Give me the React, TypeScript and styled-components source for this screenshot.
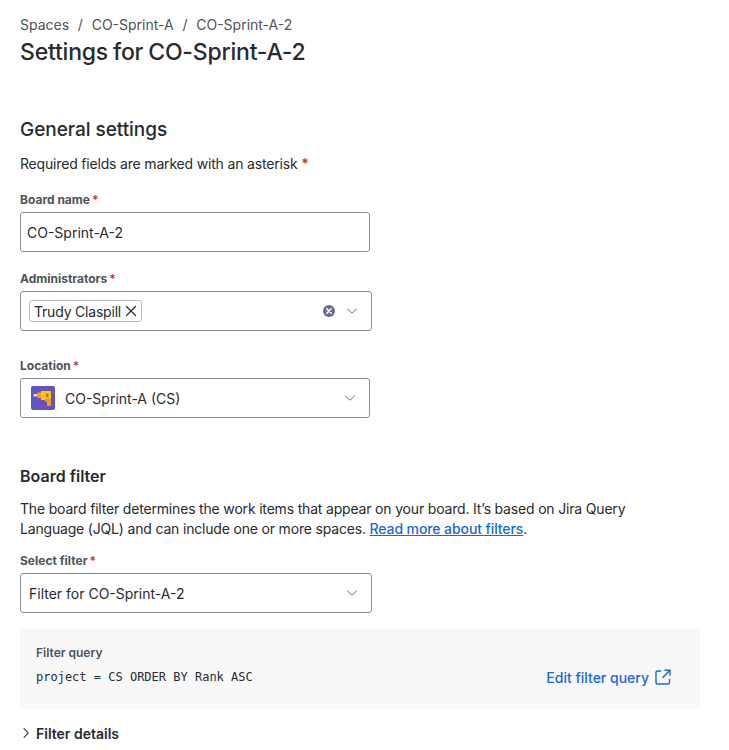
import React from "react";
import styled, { createGlobalStyle } from "styled-components";

const Global = createGlobalStyle`
  html, body { margin: 0; padding: 0; background: #fff; }
  body { font-family: Inter, "Liberation Sans", sans-serif; color: #292a2e; }
`;

const Page = styled.div`
  width: 729px;
  height: 750px;
  overflow: hidden;
  box-sizing: border-box;
  padding: 15px 29px 0 20px;
`;

const Breadcrumbs = styled.nav`
  display: flex;
  align-items: center;
  height: 20px;
  font-size: 14px;
  line-height: 20px;
  color: #505258;
`;

const Crumb = styled.span``;

const Slash = styled.span`
  margin: 0 8.75px;
  color: #505258;
`;

const Title = styled.h1`
  margin: 1px 0 0;
  font-size: 23px;
  line-height: 32px;
  font-weight: 500;
  letter-spacing: -0.2px;
  word-spacing: -1px;
  color: #292a2e;
`;

const SectionTitle = styled.h2`
  margin: 48px 0 0;
  font-size: 19px;
  line-height: 28px;
  font-weight: 500;
  letter-spacing: -0.05px;
  color: #292a2e;
`;

const Hint = styled.p`
  margin: 10px 0 0;
  font-size: 14px;
  line-height: 20px;
  letter-spacing: -0.18px;
`;

const Star = styled.span`
  color: #c9372c;
  font-weight: 600;
`;

const Label = styled.label<{ $top: number }>`
  display: block;
  margin-top: ${(p) => p.$top}px;
  font-size: 12px;
  line-height: 16px;
  font-weight: 650;
  color: #505258;
  & > ${Star} { margin-left: 2px; }
`;

const Box = styled.div<{ $width: number; $inset?: number }>`
  display: flex;
  align-items: center;
  box-sizing: border-box;
  width: ${(p) => p.$width}px;
  height: 40px;
  margin-top: 4px;
  padding: 0 8px 0 ${(p) => p.$inset ?? 8}px;
  border: 1px solid #8c8f97;
  border-radius: 3px;
  background: #fff;
  font-size: 14px;
  color: #292a2e;
`;

const BoxText = styled.span`
  flex: 1;
`;

const Tag = styled.span`
  display: inline-flex;
  align-items: center;
  box-sizing: border-box;
  height: 22px;
  padding: 0 4px;
  border: 1px solid #b7b9be;
  border-radius: 3px;
  gap: 4px;
  font-size: 14px;
  letter-spacing: -0.2px;
`;

const Spacer = styled.span`
  flex: 1;
`;

const ClearIcon = styled.svg`
  width: 14px;
  height: 14px;
  margin-right: 10px;
`;

const Chevron = styled.svg`
  width: 12px;
  height: 8px;
  margin-right: 5px;
  flex: none;
`;

const Avatar = styled.svg`
  width: 24px;
  height: 24px;
  margin: 0 10px 0 2px;
  flex: none;
`;

const SubTitle = styled.h3`
  margin: 48px 0 0;
  font-size: 16px;
  line-height: 20px;
  font-weight: 600;
  color: #292a2e;
`;

const Body = styled.p`
  margin: 13px 0 0;
  width: 660px;
  font-size: 14px;
  line-height: 20px;
  letter-spacing: -0.18px;
`;

const Link = styled.a`
  color: #1868db;
  font-weight: 500;
  letter-spacing: -0.1px;
  text-decoration: underline;
`;

const QueryPanel = styled.section`
  display: flex;
  justify-content: space-between;
  box-sizing: border-box;
  width: 680px;
  height: 80px;
  margin-top: 16px;
  padding: 16px 29px 0 16px;
  background: #f8f8f8;
  border-radius: 3px;
`;

const QueryText = styled.div`
  display: flex;
  flex-direction: column;
`;

const QueryLabel = styled.span`
  font-size: 12px;
  line-height: 16px;
  font-weight: 600;
  color: #505258;
`;

const QueryCode = styled.code`
  margin-top: 8px;
  font-family: "DejaVu Sans Mono", monospace;
  font-size: 12px;
  line-height: 16px;
  color: #292a2e;
`;

const EditLink = styled.a`
  display: inline-flex;
  align-items: center;
  gap: 6px;
  height: 20px;
  margin-top: 22px;
  font-size: 14px;
  font-weight: 500;
  color: #1868db;
`;

const Details = styled.div`
  display: flex;
  align-items: center;
  height: 20px;
  margin-top: 14px;
  font-size: 14px;
  font-weight: 600;
  color: #292a2e;
`;

const DetailChevron = styled.svg`
  width: 8px;
  height: 12px;
  margin: 0 6px 0 2px;
`;

const Down = () => (
  <Chevron viewBox="0 0 12 8" fill="none">
    <path d="M1.5 2 L6 6.2 L10.5 2" stroke="#626f86" strokeWidth="1" strokeLinecap="round" strokeLinejoin="round" />
  </Chevron>
);

export default function App() {
  return (
    <Page>
      <Global />
      <Breadcrumbs>
        <Crumb>Spaces</Crumb>
        <Slash>/</Slash>
        <Crumb>CO-Sprint-A</Crumb>
        <Slash>/</Slash>
        <Crumb>CO-Sprint-A-2</Crumb>
      </Breadcrumbs>
      <Title>Settings for CO-Sprint-A-2</Title>

      <SectionTitle>General settings</SectionTitle>
      <Hint>
        Required fields are marked with an asterisk <Star>*</Star>
      </Hint>

      <Label $top={18}>
        Board name<Star>*</Star>
      </Label>
      <Box $width={350} $inset={6}>
        <BoxText>CO-Sprint-A-2</BoxText>
      </Box>

      <Label $top={19}>
        Administrators<Star>*</Star>
      </Label>
      <Box $width={352}>
        <Tag>
          Trudy Claspill
          <svg width="12" height="12" viewBox="0 0 12 12" fill="none">
            <path d="M1.5 1.5 L10.5 10.5 M10.5 1.5 L1.5 10.5" stroke="#292a2e" strokeWidth="1.2" strokeLinecap="round" />
          </svg>
        </Tag>
        <Spacer />
        <ClearIcon viewBox="0 0 14 14">
          <circle cx="7" cy="7" r="6" fill="#626f86" />
          <path d="M4.8 4.8 L9.2 9.2 M9.2 4.8 L4.8 9.2" stroke="#fff" strokeWidth="1.5" strokeLinecap="round" />
        </ClearIcon>
        <Down />
      </Box>

      <Label $top={27}>
        Location<Star>*</Star>
      </Label>
      <Box $width={350}>
        <Avatar viewBox="0 0 24 24">
          <rect width="24" height="24" rx="2" fill="#6554c0" />
          <rect x="2.5" y="8" width="4" height="2.5" fill="#dfe1e6" />
          <rect x="6.5" y="6.5" width="4" height="5.5" fill="#ff991f" />
          <path d="M10 5 H20 V14 H10 Z" fill="#ffc400" />
          <path d="M14 12.5 H20 V20 H16 V15.5 H14 Z" fill="#ff991f" />
          <rect x="15" y="7.5" width="2.5" height="3.5" fill="#b38600" />
        </Avatar>
        <BoxText>CO-Sprint-A (CS)</BoxText>
        <Down />
      </Box>

      <SubTitle>Board filter</SubTitle>
      <Body>
        The board filter determines the work items that appear on your board. It’s based on Jira Query
        Language (JQL) and can include one or more spaces. <Link>Read more about filters</Link>.
      </Body>

      <Label $top={14}>
        Select filter<Star>*</Star>
      </Label>
      <Box $width={352}>
        <BoxText>Filter for CO-Sprint-A-2</BoxText>
        <Down />
      </Box>

      <QueryPanel>
        <QueryText>
          <QueryLabel>Filter query</QueryLabel>
          <QueryCode>project = CS ORDER BY Rank ASC</QueryCode>
        </QueryText>
        <EditLink>
          Edit filter query
          <svg width="16" height="16" viewBox="0 0 16 16" fill="none">
            <path
              d="M6 2 H2.5 A1.5 1.5 0 0 0 1 3.5 V13.5 A1.5 1.5 0 0 0 2.5 15 H13 A1.5 1.5 0 0 0 14.5 13.5 V10 M9.5 1.2 H15 V6.5 M15 1.2 L7.5 8.7"
              stroke="#1868db"
              strokeWidth="1.4"
              strokeLinejoin="round"
            />
          </svg>
        </EditLink>
      </QueryPanel>

      <Details>
        <DetailChevron viewBox="0 0 8 12" fill="none">
          <path d="M2 1.5 L6.2 6 L2 10.5" stroke="#505258" strokeWidth="1.1" strokeLinecap="round" strokeLinejoin="round" />
        </DetailChevron>
        Filter details
      </Details>
    </Page>
  );
}
